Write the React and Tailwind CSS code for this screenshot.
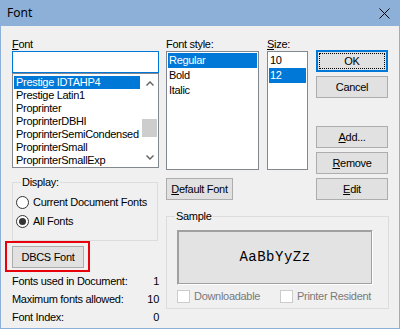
import React from "react";

function Btn({ children, className = "" }) {
  return (
    <div
      className={
        "h-[22px] border border-[#adadad] bg-[#e1e1e1] flex items-center justify-center leading-none " +
        className
      }
    >
      {children}
    </div>
  );
}

function Chevron({ up }) {
  return (
    <svg width="8" height="5" viewBox="0 0 8 5">
      <polyline
        points={up ? "0.5,4.5 4,1 7.5,4.5" : "0.5,0.5 4,4 7.5,0.5"}
        fill="none"
        stroke="#606060"
        strokeWidth="1.4"
      />
    </svg>
  );
}

function Radio({ checked }) {
  return (
    <div className="w-[13px] h-[13px] rounded-full border border-[#333333] bg-white flex items-center justify-center shrink-0">
      {checked ? <div className="w-[7px] h-[7px] rounded-full bg-[#333333]" /> : null}
    </div>
  );
}

export default function App() {
  const fonts = [
    "Prestige IDTAHP4",
    "Prestige Latin1",
    "Proprinter",
    "ProprinterDBHI",
    "ProprinterSemiCondensed",
    "ProprinterSmall",
    "ProprinterSmallExp",
  ];
  return (
    <div className="w-[400px] h-[329px] flex flex-col bg-[#f0f0f0] border-x border-b border-[#8cb0d8] font-['Liberation_Sans',Arial,sans-serif] text-[11px] tracking-[-0.3px] text-black overflow-hidden">
      {/* Title bar */}
      <div className="h-[26px] shrink-0 bg-[#8cb0d8] flex items-center justify-between pl-[6px] pr-[9px]">
        <span className="font-['Noto_Sans',sans-serif] text-[12px] tracking-normal">Font</span>
        <svg width="11" height="11" viewBox="0 0 11 11">
          <line x1="0.5" y1="0.5" x2="10.5" y2="10.5" stroke="#000" strokeWidth="1" />
          <line x1="10.5" y1="0.5" x2="0.5" y2="10.5" stroke="#000" strokeWidth="1" />
        </svg>
      </div>

      <div className="flex pl-[11px] pt-[11px] gap-[7px]">
        {/* Left column */}
        <div className="w-[147px] flex flex-col">
          <div className="h-[14px] leading-[14px]">
            <span className="underline">F</span>ont
          </div>
          <div className="h-[22px] border border-[#0078d7] bg-white" />
          <div className="h-[95px] border border-[#828790] bg-white flex pl-[1px] py-[1px] gap-[1px]">
            <div className="w-[126px] flex flex-col pt-[1px]">
              {fonts.map((f, i) => (
                <div
                  key={f}
                  className={
                    i === 0
                      ? "h-[13px] leading-[13px] pl-[2px] whitespace-nowrap bg-[#0078d7] text-white"
                      : "h-[13px] leading-[13px] pl-[2px] whitespace-nowrap"
                  }
                >
                  {f}
                </div>
              ))}
            </div>
            <div className="w-[17px] flex flex-col bg-white">
              <div className="h-[17px] flex items-center justify-center">
                <Chevron up />
              </div>
              <div className="flex-1 flex flex-col">
                <div className="mt-[27px] h-[18px] mx-[1px] bg-[#cdcdcd]" />
              </div>
              <div className="h-[17px] flex items-center justify-center">
                <Chevron />
              </div>
            </div>
          </div>

          <fieldset className="mt-[7px] w-[146px] border border-[#dcdcdc] pb-[9px]">
            <legend className="ml-[8px] px-[1px] h-[14px] leading-[14px]">Display:</legend>
            <div className="pt-[4px] flex flex-col">
              <div className="h-[19px] flex items-center pl-[3px] gap-[4px]">
                <Radio />
                <span>Current Document Fonts</span>
              </div>
              <div className="h-[19px] flex items-center pl-[3px] gap-[4px]">
                <Radio checked />
                <span>All Fonts</span>
              </div>
            </div>
          </fieldset>

          <div className="relative mt-[5px] w-[72px]">
            <Btn className="h-[21px]">DBCS Font</Btn>
            <div className="absolute left-[-7px] top-[-5px] w-[85px] h-[31px] border-2 border-[#e8000b]" />
          </div>

          <div className="mt-[4px] flex flex-col">
            <div className="h-[18px] flex items-center justify-between">
              <span>Fonts used in Document:</span>
              <span>1</span>
            </div>
            <div className="h-[18px] flex items-center justify-between">
              <span>Maximum fonts allowed:</span>
              <span>10</span>
            </div>
            <div className="h-[18px] flex items-center justify-between">
              <span>Font Index:</span>
              <span>0</span>
            </div>
          </div>
        </div>

        {/* Right part */}
        <div className="w-[223px] flex flex-col">
          <div className="flex gap-[8px]">
            <div className="w-[93px] flex flex-col">
              <div className="h-[14px] leading-[14px]">Font style:</div>
              <div className="h-[119px] border border-[#828790] bg-white p-[1px] flex flex-col">
                <div className="h-[15px] leading-[15px] pl-[1px] bg-[#0078d7] text-white">Regular</div>
                <div className="h-[15px] leading-[15px] pl-[1px]">Bold</div>
                <div className="h-[15px] leading-[15px] pl-[1px]">Italic</div>
              </div>
              <Btn className="mt-[8px] w-[67px] h-[21px]">
                <span>
                  <span className="underline">D</span>efault Font
                </span>
              </Btn>
            </div>
            <div className="w-[41px] flex flex-col">
              <div className="h-[14px] leading-[14px]">
                <span className="underline">S</span>ize:
              </div>
              <div className="h-[119px] border border-[#828790] bg-white p-[1px] flex flex-col">
                <div className="h-[15px] leading-[15px] pl-[1px]">10</div>
                <div className="h-[15px] leading-[15px] pl-[1px] bg-[#0078d7] text-white">12</div>
              </div>
            </div>
            <div className="w-[72px] flex flex-col pt-[13px]">
              <div className="h-[22px] border-2 border-[#0078d7] bg-[#e1e1e1] p-[1px]">
                <div className="w-full h-full border border-dotted border-black flex items-center justify-center leading-none">
                  OK
                </div>
              </div>
              <Btn className="mt-[4px]">Cancel</Btn>
              <Btn className="mt-[28px]">
                <span>
                  <span className="underline">A</span>dd...
                </span>
              </Btn>
              <Btn className="mt-[4px]">
                <span>
                  <span className="underline">R</span>emove
                </span>
              </Btn>
              <Btn className="mt-[4px]">
                <span>
                  <span className="underline">E</span>dit
                </span>
              </Btn>
            </div>
          </div>

          <fieldset className="mt-[9px] w-[223px] border border-[#dcdcdc] pb-[5px]">
            <legend className="ml-[8px] px-[1px] h-[14px] leading-[14px]">Sample</legend>
            <div className="mt-[7px] ml-[10px] w-[196px] h-[55px] border border-t-[#a0a0a0] border-l-[#a0a0a0] border-b-white border-r-white">
              <div className="w-full h-full border border-[#a0a0a0] bg-[#e3e3e3] flex items-center justify-center font-['Liberation_Mono',monospace] text-[14px] tracking-[0.5px]">
                AaBbYyZz
              </div>
            </div>
            <div className="mt-[5px] ml-[10px] flex items-center h-[13px] text-[#7a7a7a]">
              <div className="w-[103px] flex items-center gap-[4px]">
                <div className="w-[13px] h-[13px] border border-[#cccccc] bg-white shrink-0" />
                <span>Downloadable</span>
              </div>
              <div className="flex items-center gap-[4px]">
                <div className="w-[13px] h-[13px] border border-[#cccccc] bg-white shrink-0" />
                <span>Printer Resident</span>
              </div>
            </div>
          </fieldset>
        </div>
      </div>
    </div>
  );
}
